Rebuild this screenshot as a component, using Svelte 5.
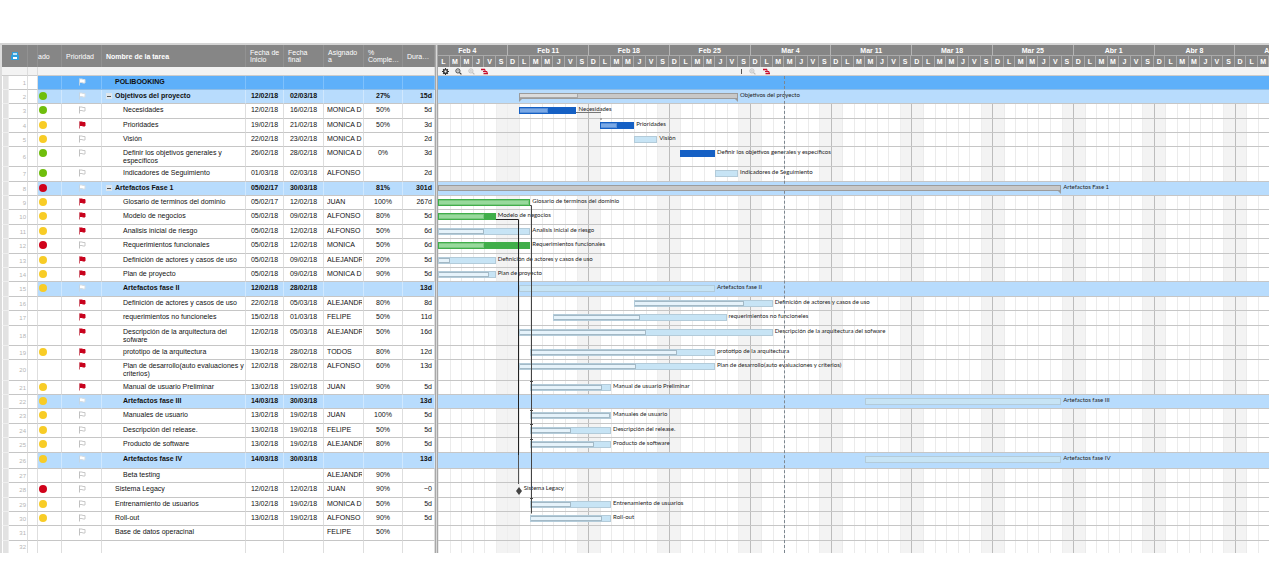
<script>
  const DAYS = 72;
  const DAY_LETTERS = ['L', 'M', 'M', 'J', 'V', 'S', 'D'];
  const weeks = ['Feb 4', 'Feb 11', 'Feb 18', 'Feb 25', 'Mar 4', 'Mar 11', 'Mar 18', 'Mar 25', 'Abr 1', 'Abr 8', 'Abr 15'];
  const days = Array.from({ length: DAYS }, (_, i) => ({
    letter: DAY_LETTERS[i % 7],
    weekend: i % 7 > 4,
    weekStart: i % 7 === 6 && i > 6
  }));
  const TODAY = 30;

  // h: row height, s: status, f: priority flag, lv: indent,
  // bar: [first day, day after the last, progress %, kind]
  const rows = [
    { h: 14, s: '', f: 'white', name: 'POLIBOOKING', lv: 0, kind: 'root' },
    { h: 14, s: 'green', f: 'white', name: 'Objetivos del proyecto', lv: 0, kind: 'group', toggle: true, a: '12/02/18', b: '02/03/18', p: '27%', d: '15d', bar: [7, 26, 27, 'summary'] },
    { h: 15, s: 'green', f: 'empty', name: 'Necesidades', lv: 1, a: '12/02/18', b: '16/02/18', w: 'MONICA D', p: '50%', d: '5d', bar: [7, 12, 50, 'blue'] },
    { h: 14, s: 'yellow', f: 'red', name: 'Prioridades', lv: 1, a: '19/02/18', b: '21/02/18', w: 'MONICA D', p: '50%', d: '3d', bar: [14, 17, 50, 'blue'] },
    { h: 14, s: 'yellow', f: 'empty', name: 'Visión', lv: 1, a: '22/02/18', b: '23/02/18', w: 'MONICA D', p: '', d: '2d', bar: [17, 19, 0, 'light'] },
    { h: 20, s: 'green', f: 'empty', name: 'Definir los objetivos generales y específicos', lv: 1, a: '26/02/18', b: '28/02/18', w: 'MONICA D', p: '0%', d: '3d', bar: [21, 24, 0, 'blue'] },
    { h: 15, s: 'green', f: 'empty', name: 'Indicadores de Seguimiento', lv: 1, a: '01/03/18', b: '02/03/18', w: 'ALFONSO', p: '', d: '2d', bar: [24, 26, 0, 'light'] },
    { h: 14, s: 'red', f: 'white', name: 'Artefactos Fase 1', lv: 0, kind: 'group', toggle: true, a: '05/02/17', b: '30/03/18', p: '81%', d: '301d', bar: [0, 54, 0, 'summary open'] },
    { h: 14, s: 'yellow', f: 'red', name: 'Glosario de terminos del dominio', lv: 1, a: '05/02/17', b: '12/02/18', w: 'JUAN', p: '100%', d: '267d', bar: [0, 8, 100, 'green'] },
    { h: 15, s: 'yellow', f: 'red', name: 'Modelo de negocios', lv: 1, a: '05/02/18', b: '09/02/18', w: 'ALFONSO', p: '80%', d: '5d', bar: [0, 5, 80, 'green'] },
    { h: 14, s: 'yellow', f: 'red', name: 'Analisis inicial de riesgo', lv: 1, a: '05/02/18', b: '12/02/18', w: 'ALFONSO', p: '50%', d: '6d', bar: [0, 8, 50, 'light'] },
    { h: 15, s: 'red', f: 'empty', name: 'Requerimientos funcionales', lv: 1, a: '05/02/18', b: '12/02/18', w: 'MONICA', p: '50%', d: '6d', bar: [0, 8, 50, 'green'] },
    { h: 14, s: 'yellow', f: 'red', name: 'Definición de actores y casos de uso', lv: 1, a: '05/02/18', b: '09/02/18', w: 'ALEJANDR', p: '20%', d: '5d', bar: [0, 5, 20, 'light'] },
    { h: 14, s: 'yellow', f: 'red', name: 'Plan de proyecto', lv: 1, a: '05/02/18', b: '09/02/18', w: 'MONICA D', p: '90%', d: '5d', bar: [0, 5, 90, 'light'] },
    { h: 15, s: 'yellow', f: 'white', name: 'Artefactos fase II', lv: 1, kind: 'group', a: '12/02/18', b: '28/02/18', p: '', d: '13d', bar: [7, 24, 0, 'light'] },
    { h: 14, s: '', f: 'red', name: 'Definición de actores y casos de uso', lv: 1, a: '22/02/18', b: '05/03/18', w: 'ALEJANDR', p: '80%', d: '8d', bar: [17, 29, 80, 'light'] },
    { h: 15, s: '', f: 'red', name: 'requerimientos no funcioneles', lv: 1, a: '15/02/18', b: '01/03/18', w: 'FELIPE', p: '50%', d: '11d', bar: [10, 25, 50, 'light'] },
    { h: 20, s: '', f: 'red', name: 'Descripción de la arquitectura del sofware', lv: 1, a: '12/02/18', b: '05/03/18', w: 'ALEJANDR', p: '50%', d: '16d', bar: [7, 29, 50, 'light'] },
    { h: 14, s: 'yellow', f: 'red', name: 'prototipo de la arquitectura', lv: 1, a: '13/02/18', b: '28/02/18', w: 'TODOS', p: '80%', d: '12d', bar: [8, 24, 80, 'light'] },
    { h: 21, s: '', f: 'red', name: 'Plan de desarrollo(auto evaluaciones y criterios)', lv: 1, a: '12/02/18', b: '28/02/18', w: 'ALFONSO', p: '60%', d: '13d', bar: [7, 24, 60, 'light'] },
    { h: 14, s: 'yellow', f: 'red', name: 'Manual de usuario Preliminar', lv: 1, a: '13/02/18', b: '19/02/18', w: 'JUAN', p: '90%', d: '5d', bar: [8, 15, 90, 'light'] },
    { h: 14, s: 'yellow', f: 'white', name: 'Artefactos fase III', lv: 1, kind: 'group', a: '14/03/18', b: '30/03/18', p: '', d: '13d', bar: [37, 54, 0, 'light'] },
    { h: 15, s: 'yellow', f: 'empty', name: 'Manuales de usuario', lv: 1, a: '13/02/18', b: '19/02/18', w: 'JUAN', p: '100%', d: '5d', bar: [8, 15, 100, 'light'] },
    { h: 14, s: 'yellow', f: 'empty', name: 'Descripción del release.', lv: 1, a: '13/02/18', b: '19/02/18', w: 'FELIPE', p: '50%', d: '5d', bar: [8, 15, 50, 'light'] },
    { h: 15, s: 'yellow', f: 'empty', name: 'Producto de software', lv: 1, a: '13/02/18', b: '19/02/18', w: 'ALEJANDR', p: '80%', d: '5d', bar: [8, 15, 80, 'light'] },
    { h: 16, s: 'yellow', f: 'white', name: 'Artefactos fase IV', lv: 1, kind: 'group', a: '14/03/18', b: '30/03/18', p: '', d: '13d', bar: [37, 54, 0, 'light'] },
    { h: 14, s: '', f: 'empty', name: 'Beta testing', lv: 1, a: '', b: '', w: 'ALEJANDR', p: '90%', d: '' },
    { h: 15, s: 'red', f: 'empty', name: 'Sistema Legacy', lv: 0, a: '12/02/18', b: '12/02/18', w: 'JUAN', p: '90%', d: '~0', bar: [7, 7, 0, 'milestone'] },
    { h: 14, s: 'yellow', f: 'empty', name: 'Entrenamiento de usuarios', lv: 0, a: '13/02/18', b: '19/02/18', w: 'MONICA D', p: '50%', d: '5d', bar: [8, 15, 50, 'light'] },
    { h: 14, s: 'yellow', f: 'empty', name: 'Roll-out', lv: 0, a: '13/02/18', b: '19/02/18', w: 'ALFONSO', p: '90%', d: '5d', bar: [8, 15, 90, 'light'] },
    { h: 15, s: '', f: 'empty', name: 'Base de datos operacinal', lv: 0, a: '', b: '', w: 'FELIPE', p: '50%', d: '' },
    { h: 12, s: '', f: '', name: '', lv: 0, a: '', b: '', w: '', p: '', d: '' }
  ];
  const pct = (n) => (n / DAYS) * 100 + '%';
  const total = rows.reduce((sum, r) => sum + r.h, 0);
</script>

{#snippet magnifier(plus)}
  <svg viewBox="0 0 12 12" aria-hidden="true">
    <circle cx="5" cy="5" r="3.6" fill="none" stroke="currentColor" stroke-width="1.5" />
    <path d="M7.8 7.8 11 11" stroke="currentColor" stroke-width="2" />
    <path d={plus ? 'M3.2 5h3.6M5 3.2v3.6' : 'M3.2 5h3.6'} stroke="currentColor" />
  </svg>
{/snippet}

{#snippet critical()}
  <svg viewBox="0 0 7 7" aria-hidden="true">
    <path d="M0 1.500h4M2.500 5.500H7" stroke="#c8102e" stroke-width="1.4" />
    <path d="M4 1.500v2h1.500M2 3.500h4v2" fill="none" stroke="#c8102e" />
  </svg>
{/snippet}

<main class="page">
  <div class="sheet">
    <section class="grid-pane">
      <table>
        <colgroup>
          <col class="c-grip" /><col class="c-num" /><col class="c-gap" /><col class="c-state" /><col class="c-prio" />
          <col /><col class="c-start" /><col class="c-end" /><col class="c-end" /><col class="c-pct" /><col class="c-dur" />
        </colgroup>
        <thead>
          <tr class="head">
            <th colspan="2" class="save">
              <button class="icon save-btn" aria-label="Guardar">
                <svg viewBox="0 0 8 8" aria-hidden="true">
                  <path d="M1 0h6v3h1v5H0V3h1z" fill="#2f9fdc" />
                  <path d="M2 1h4v2H2z" fill="#bfe4f8" />
                  <path d="M2 5h4v2H2z" fill="#fff" />
                </svg>
              </button>
            </th>
            <th></th>
            <th class="plain cut">ado</th>
            <th class="plain">Prioridad</th>
            <th>Nombre de la tarea</th>
            <th class="plain">Fecha de<br />Inicio</th>
            <th class="plain">Fecha<br />final</th>
            <th class="plain">Asignado<br />a</th>
            <th class="plain">%<br />Comple…</th>
            <th class="plain">Dura…</th>
          </tr>
          <tr class="strip"><td colspan="2"></td><td></td><td colspan="8"></td></tr>
        </thead>
        <tbody>
          {#each rows as r, i}
            <tr class={r.kind ?? 'task'} style="height: {r.h}px">
              <td class="grip"></td>
              <td class="num">{i + 1}</td>
              <td class="gap"></td>
              <td class="state">
                {#if r.s}<span class="dot {r.s}"></span>{/if}
              </td>
              <td class="prio">
                {#if r.f}
                  <svg class="flag {r.f}" viewBox="0 0 8 8" aria-hidden="true">
                    <path class="cloth" d="M1.500 1h3v.5H7v3.500H4.500V4.500h-3z" />
                    <path class="pole" d="M1.500 .5v7" />
                  </svg>
                {/if}
              </td>
              <td class="name">
                <div class="name-in" class:deep={r.lv === 1}>
                  {#if r.toggle}<button class="toggle" aria-label="Contraer"></button>{/if}<span>{r.name}</span>
                </div>
              </td>
              <td class="mid">{r.a ?? ''}</td>
              <td class="mid">{r.b ?? ''}</td>
              <td class="who"><div>{r.w ?? ''}</div></td>
              <td class="mid">{r.p ?? ''}</td>
              <td class="dur">{r.d ?? ''}</td>
            </tr>
          {/each}
        </tbody>
      </table>
    </section>

    <div class="divider"></div>

    <section class="gantt">
      <div class="weeks">
        {#each weeks as w, i}
          <div class="week" style="width: {pct(7)}; margin-left: {i === 0 ? pct(-1) : 0}">{w}</div>
        {/each}
      </div>
      <div class="days">
        {#each days as d}<div>{d.letter}</div>{/each}
      </div>
      <div class="tools">
        <div class="tool-set">
          <button class="icon dark" aria-label="Configuración">
            <svg viewBox="0 0 12 12" aria-hidden="true">
              <circle cx="6" cy="6" r="3.200" fill="none" stroke="currentColor" stroke-width="2.400" />
              <path d="M6 0v2M6 10v2M0 6h2M10 6h2M1.800 1.800l1.500 1.500M8.700 8.700l1.500 1.500M1.800 10.200l1.500-1.500M8.700 3.300l1.500-1.500" stroke="currentColor" stroke-width="2" />
            </svg>
          </button>
          <button class="icon dark" aria-label="Alejar">{@render magnifier(false)}</button>
          <button class="icon pale" aria-label="Acercar">{@render magnifier(true)}</button>
          <button class="icon" aria-label="Ruta crítica">{@render critical()}</button>
        </div>
        <div class="tool-set second" style="margin-left: {pct(26)}">
          <span class="stem"></span>
          <button class="icon pale" aria-label="Acercar más">{@render magnifier(true)}</button>
          <button class="icon" aria-label="Mostrar ruta crítica">{@render critical()}</button>
        </div>
      </div>

      <div class="chart">
        <div class="layer columns">
          {#each days as d}<div class:weekend={d.weekend} class:week-start={d.weekStart}></div>{/each}
        </div>
        <div class="layer">
          {#each rows as r}
            <div class="lane {r.kind ?? 'task'}" style="height: {r.h}px">
              {#if r.bar}
                {#if r.bar[3] === 'milestone'}
                  <svg class="diamond" style="margin-left: {pct(r.bar[0])}" viewBox="0 0 6 8" aria-hidden="true"><path d="M3 0 6 4 3 8 0 4z" fill="#444" /></svg>
                {:else}
                  <div class="bar {r.bar[3]}" style="margin-left: {pct(r.bar[0])}; width: {pct(r.bar[1] - r.bar[0])}">
                    {#if r.bar[2]}<div class="progress" style="width: {r.bar[2]}%"></div>{/if}
                  </div>
                {/if}
                <span class="label">{r.name}</span>
              {/if}
            </div>
          {/each}
        </div>
        <svg class="layer links" viewBox="0 0 831 {total}" preserveAspectRatio="none" aria-hidden="true">
          <path d="M138 36.500h25M163 42v2" stroke="#777" />
          <path d="M58 143.500H80.500V379" stroke="#222" />
          <path d="M80.500 379V408" stroke="#555" />
          <path d="M92 129.500h1.500V437.500" stroke="#444" />
          <path d="M92 305.500h3M92 334.500h3M92 348.500h3M92 363.500h3M92 422.500h3" stroke="#444" />
        </svg>
        <div class="layer today" style="margin-left: {pct(TODAY)}"></div>
      </div>
    </section>
  </div>
</main>

<style>
  :global(body) { margin: 0; background: #fff; }
  .page {
    padding: 43px 11px 12px 0;
    font: 7px/8px "Liberation Sans", Arial, sans-serif;
    color: #111;
  }
  .sheet { display: flex; border-top: 2px solid #d4d4d4; }
  .grid-pane { flex: none; width: 433px; border-left: 2px solid #dcdcdc; }
  table { width: 100%; table-layout: fixed; border-collapse: separate; border-spacing: 0; }
  .c-grip { width: 7px; }
  .c-num { width: 19px; }
  .c-gap { width: 10px; }
  .c-state { width: 24px; }
  .c-prio { width: 40px; }
  .c-start { width: 38px; }
  .c-end { width: 40px; }
  .c-pct { width: 39px; }
  .c-dur { width: 32px; }
  th, td { box-sizing: border-box; padding: 0; }

  .head { height: 22px; }
  .head th {
    background: #868686;
    color: #fff;
    text-align: left;
    vertical-align: middle;
    border-right: 1px solid #929292;
    line-height: 7px;
    padding: 0 0 0 4px;
    white-space: nowrap;
  }
  .head .plain { font-weight: 400; }
  .head .cut { padding-left: 0; }
  .head .save { text-align: center; padding: 0; }
  .strip { height: 9px; }
  .strip td { background: #f3f3f3; border-right: 1px solid #ddd; border-bottom: 1px solid #ccc; }

  tbody td {
    vertical-align: top;
    padding-top: 2px;
    border-right: 1px solid #dedede;
    border-bottom: 1px solid #c6c6c6;
    white-space: nowrap;
    overflow: hidden;
  }
  tbody tr:last-child td { border-bottom: 0; }
  td.grip { background: #e2e2e2; border-right-color: #eee; border-left: 1px solid #fff; border-bottom-color: #eee; }
  td.num { vertical-align: middle; text-align: right; color: #b5b5b5; padding: 0 1px 0 0; font-size: 6px; }
  td.mid { text-align: center; }
  td.dur { text-align: right; padding-right: 2px; }
  td.who div { margin: 0 1px 0 3px; overflow: hidden; }
  .name-in { position: relative; padding: 0 0 0 13px; white-space: normal; }
  .name-in.deep { padding-left: 21px; }
  td.name { white-space: normal; }
  .root td:nth-child(n + 4) { background: #5eb0fa; border-right-color: #7fc1fc; border-bottom-color: #8fbde6; font-weight: 700; }
  .group td:nth-child(n + 4) { background: #b8dcfd; border-right-color: #d0e8fe; font-weight: 700; }

  .dot { display: block; width: 8px; height: 8px; margin-left: 1px; border-radius: 50%; }
  .dot.green { background: #6fbe0c; }
  .dot.yellow { background: #f8cc26; }
  .dot.red { background: #d0021b; }
  .flag { display: block; width: 8px; height: 8px; margin: 0 auto; }
  .cloth { fill: #fff; stroke: #c8c8c8; }
  .pole { fill: none; stroke: #c0c0c0; }
  .flag.white .cloth { stroke: #d5dde4; }
  .flag.white .pole { stroke: #c5d5e2; }
  .flag.red .cloth { fill: #c8021d; stroke: #c8021d; }
  .flag.red .pole { stroke: #d0606f; }

  button { appearance: none; border: 0; margin: 0; padding: 0; background: none; font: inherit; cursor: pointer; }
  .icon { display: block; width: 7px; height: 7px; color: #333; }
  .icon svg { display: block; width: 100%; height: 100%; }
  .save-btn { width: 8px; height: 8px; margin: 0 auto; }
  .dark { color: #333; }
  .pale { color: #bbb; }
  .toggle {
    position: absolute;
    left: 4px;
    top: 1px;
    width: 6px;
    height: 6px;
    background: linear-gradient(#555, #555) center / 4px 1px no-repeat #dfe6ec;
  }

  .divider { flex: none; width: 1px; border: solid #a8a8a8; border-width: 0 1px; background: #d8d8d8; }

  .gantt { flex: 1; min-width: 0; }
  .weeks, .days { display: flex; height: 11px; background: #868686; color: #fff; font-weight: 700; overflow: hidden; }
  .week { flex: none; box-sizing: border-box; text-align: center; line-height: 11px; border-left: 1px solid #b5b5b5; border-bottom: 1px solid #aaa; }
  .days div { flex: 1 1 0; min-width: 0; box-sizing: border-box; text-align: center; line-height: 11px; border-right: 1px solid #aaa; }
  .tools { display: grid; height: 8px; background: #f3f3f3; border-bottom: 1px solid #ccc; }
  .tool-set { grid-area: 1 / 1; display: flex; align-items: center; gap: 6px; padding-left: 4px; }
  .tool-set.second { padding-left: 3px; gap: 7px; }
  .stem { width: 1px; height: 5px; background: #555; }

  .chart { display: grid; overflow: hidden; }
  .layer { grid-area: 1 / 1; min-width: 0; min-height: 0; }
  .columns { display: flex; }
  .columns div { flex: 1 1 0; box-sizing: border-box; border-left: 1px solid #ebebeb; }
  .columns .weekend { background: #f3f3f3; border-left-color: #eee; }
  .columns .week-start { border-left-color: #bcbcbc; }
  .lane { display: flex; box-sizing: border-box; border-bottom: 1px solid #c6c6c6; white-space: nowrap; }
  .lane:last-child { border-bottom: 0; }
  .lane.root { background: #5eb0fa; border-bottom-color: #8fbde6; }
  .lane.group { background: #b8dcfd; }
  .bar { flex: none; box-sizing: border-box; height: 7px; margin-top: 3px; border: 1px solid; }
  .progress { box-sizing: border-box; height: 5px; border: solid; border-width: 1px 1px 1px 0; }
  .light { background: #c7e4f5; border-color: #b3cbd9; }
  .light .progress { background: #e6f3fb; border-color: #a3b9c6; }
  .blue { background: #1560c4; border-color: #1560c4; }
  .blue .progress { background: #7aa9e6; border-color: #5b90d8; }
  .green.bar { background: #40ae4a; border-color: #40ae4a; }
  .green .progress { background: #98da9c; border-color: #7cc881; }
  .summary { position: relative; height: 6px; background: #c8c8c8; border-color: #9c9c9c; }
  .summary .progress { height: 4px; background: #dcdcdc; border-color: #a8a8a8; border-width: 0 1px 1px 0; }
  .summary::before, .summary::after { content: ""; position: absolute; top: 4px; border: solid transparent; }
  .summary::before { left: -1px; border-width: 4px 4px 0 0; border-top-color: #9c9c9c; }
  .summary::after { right: -1px; border-width: 4px 0 0 4px; border-top-color: #9c9c9c; }
  .open::before { display: none; }
  .label { margin-left: 2px; font: 6px/10px Lato, "Liberation Sans", sans-serif; color: #222; }
  .diamond { flex: none; width: 6px; height: 8px; margin: 4px 0 0; transform: translateX(-50%); }
  .diamond + .label { margin-left: -1px; }
  .links { width: 100%; height: 100%; fill: none; }
  .links path { vector-effect: non-scaling-stroke; }
  .today { border-left: 1px dashed #7d8790; }
</style>
